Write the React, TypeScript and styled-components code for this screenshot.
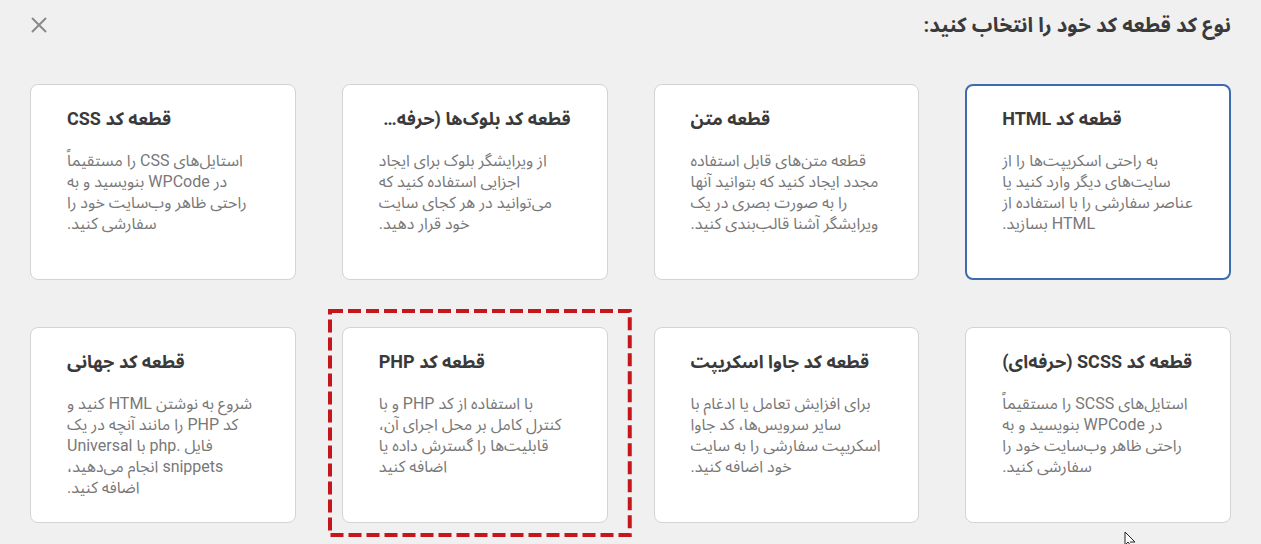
import React from 'react';
import styled, { createGlobalStyle, css } from 'styled-components';

const GlobalStyle = createGlobalStyle`
  html, body {
    margin: 0;
    padding: 0;
    background: #f0f0f1;
  }
  body {
    font-family: Roboto, "Noto Sans Arabic", "DejaVu Sans", sans-serif;
  }
`;

const Page = styled.div`
  position: relative;
  direction: rtl;
  width: 1261px;
  height: 544px;
  overflow: hidden;
  box-sizing: border-box;
  padding: 0 30px;
`;

const Header = styled.div`
  display: flex;
  align-items: center;
  justify-content: space-between;
  height: 50px;
`;

const Title = styled.h2`
  margin: 0;
  font-size: 20.5px;
  font-weight: 700;
  color: #3a3a3a;
`;

const CloseButton = styled.button`
  display: flex;
  align-items: center;
  justify-content: center;
  width: 20px;
  height: 20px;
  padding: 0;
  margin-left: -1px;
  border: none;
  background: none;
  color: #8a8a8a;
  cursor: pointer;
`;

const Grid = styled.div`
  display: grid;
  grid-template-columns: repeat(4, minmax(0, 1fr));
  column-gap: 46px;
  row-gap: 47px;
  margin-top: 34px;
`;

const Card = styled.div<{ $selected?: boolean }>`
  position: relative;
  box-sizing: border-box;
  height: 196px;
  background: #fff;
  border: 1px solid #d3d3d3;
  border-radius: 8px;
  padding: 22px 36px;
  text-align: left;
  cursor: pointer;

  ${(p) =>
    p.$selected &&
    css`
      border: 2px solid #3d6bb0;
      padding: 21px 35px;
    `}
`;

const CardTitle = styled.h3`
  margin: 0 0 19px;
  font-size: 18px;
  line-height: 24px;
  font-weight: 700;
  color: #3a3a3a;
  white-space: nowrap;
  overflow: hidden;
  text-overflow: ellipsis;
`;

const CardText = styled.p`
  margin: 0;
  font-size: 16px;
  line-height: 21px;
  color: #787878;
`;

const Marker = styled.svg`
  position: absolute;
  top: -19px;
  left: -15px;
  width: calc(100% + 40px);
  height: calc(100% + 34px);
  overflow: visible;
  pointer-events: none;
`;

const Pointer = styled.svg`
  position: absolute;
  left: 1124px;
  top: 532px;
`;

type Snippet = {
  title: string;
  text: string;
  selected?: boolean;
  marked?: boolean;
};

const snippets: Snippet[] = [
  {
    title: 'قطعه کد HTML',
    text: 'به راحتی اسکریپت‌ها را از سایت‌های دیگر وارد کنید یا عناصر سفارشی را با استفاده از HTML بسازید.',
    selected: true,
  },
  {
    title: 'قطعه متن',
    text: 'قطعه متن‌های قابل استفاده مجدد ایجاد کنید که بتوانید آنها را به صورت بصری در یک ویرایشگر آشنا قالب‌بندی کنید.',
  },
  {
    title: 'قطعه کد بلوک‌ها (حرفه‌ای)',
    text: 'از ویرایشگر بلوک برای ایجاد اجزایی استفاده کنید که می‌توانید در هر کجای سایت خود قرار دهید.',
  },
  {
    title: 'قطعه کد CSS',
    text: 'استایل‌های CSS را مستقیماً در WPCode بنویسید و به راحتی ظاهر وب‌سایت خود را سفارشی کنید.',
  },
  {
    title: 'قطعه کد SCSS (حرفه‌ای)',
    text: 'استایل‌های SCSS را مستقیماً در WPCode بنویسید و به راحتی ظاهر وب‌سایت خود را سفارشی کنید.',
  },
  {
    title: 'قطعه کد جاوا اسکریپت',
    text: 'برای افزایش تعامل یا ادغام با سایر سرویس‌ها، کد جاوا اسکریپت سفارشی را به سایت خود اضافه کنید.',
  },
  {
    title: 'قطعه کد PHP',
    text: 'با استفاده از کد PHP و با کنترل کامل بر محل اجرای آن، قابلیت‌ها را گسترش داده یا اضافه کنید',
    marked: true,
  },
  {
    title: 'قطعه کد جهانی',
    text: 'شروع به نوشتن HTML کنید و کد PHP را مانند آنچه در یک فایل .php با Universal snippets انجام می‌دهید، اضافه کنید.',
  },
];

const App: React.FC = () => {
  return (
    <>
      <GlobalStyle />
      <Page>
        <Header>
          <Title>نوع کد قطعه کد خود را انتخاب کنید:</Title>
          <CloseButton aria-label="بستن">
            <svg width="18" height="18" viewBox="0 0 18 18">
              <path d="M2 2 L16 16 M16 2 L2 16" stroke="currentColor" strokeWidth="2" />
            </svg>
          </CloseButton>
        </Header>
        <Grid>
          {snippets.map((s) => (
            <Card key={s.title} $selected={s.selected}>
              <CardTitle>{s.title}</CardTitle>
              <CardText>{s.text}</CardText>
              {s.marked && (
                <Marker>
                  <rect
                    x="2"
                    y="2"
                    style={{ width: 'calc(100% - 4px)', height: 'calc(100% - 4px)' }}
                    fill="none"
                    stroke="#c4161c"
                    strokeWidth="4"
                    strokeDasharray="13 5"
                  />
                </Marker>
              )}
            </Card>
          ))}
        </Grid>
        <Pointer width="14" height="14" viewBox="0 0 14 14">
          <path d="M1 0 L1 13 L4 10 L7 14 M1 0 L11 10 L6 10" fill="#fff" stroke="#222" strokeWidth="1" />
        </Pointer>
      </Page>
    </>
  );
};

export default App;
